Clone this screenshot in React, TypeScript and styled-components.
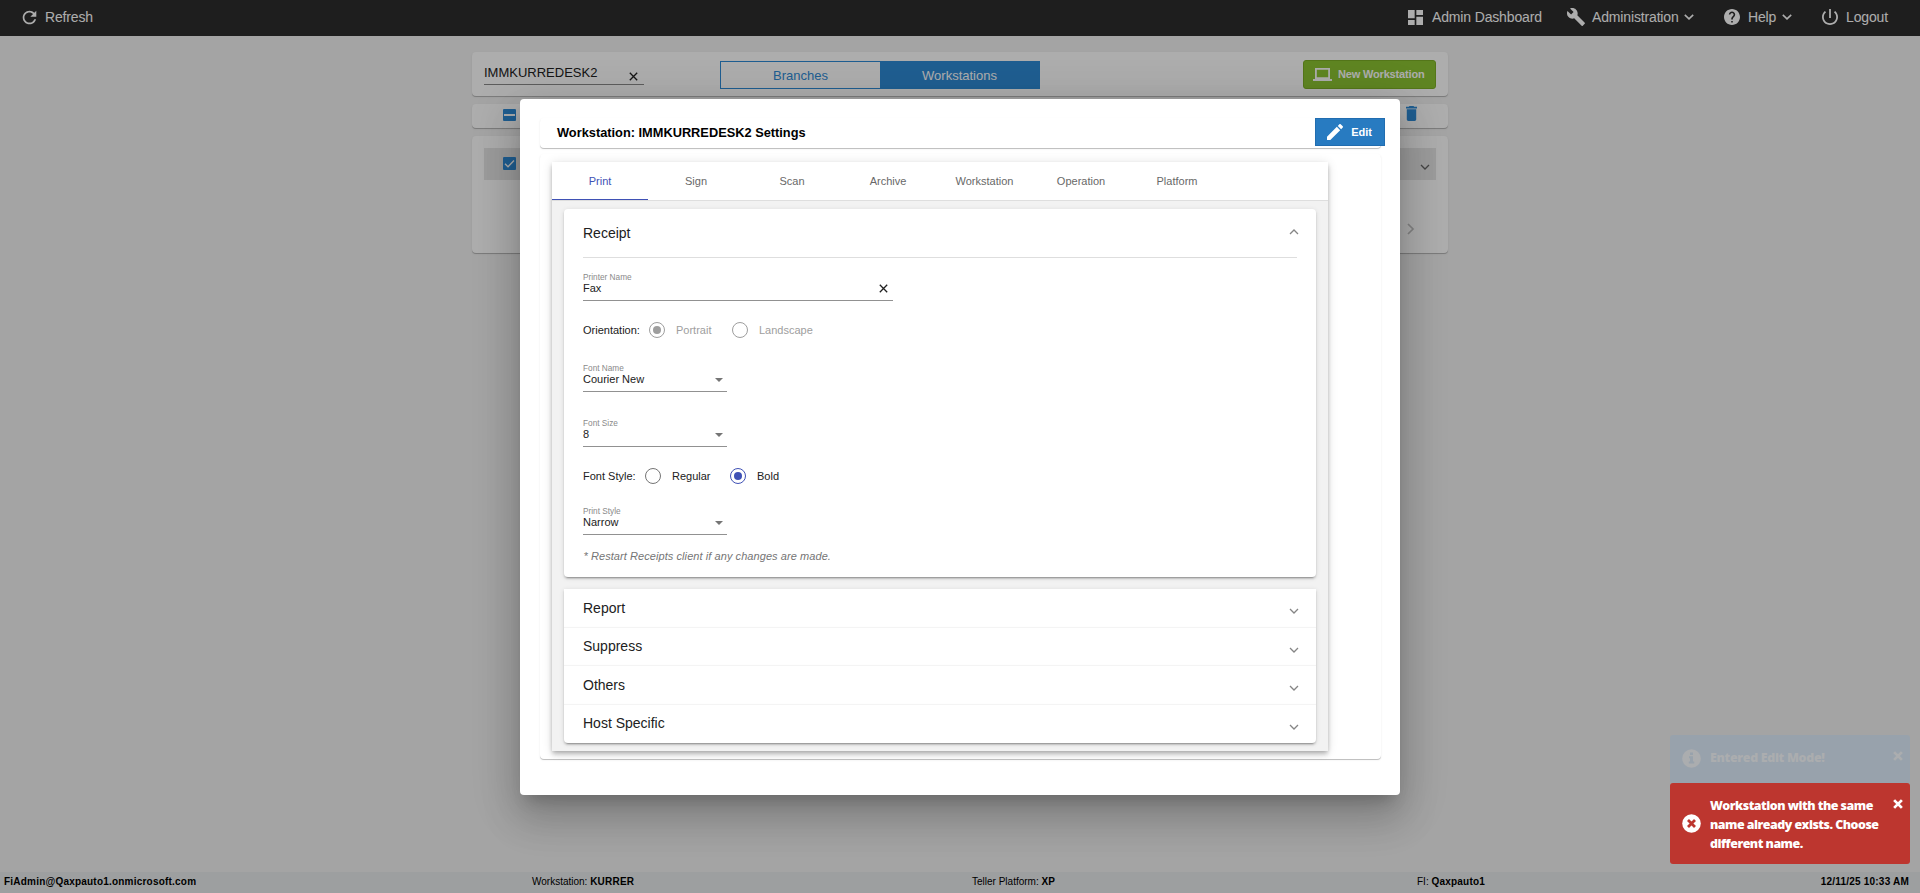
import React from "react";
import styled, { createGlobalStyle, css } from "styled-components";

const Global = createGlobalStyle`
  *, *::before, *::after { box-sizing: border-box; }
  html, body { margin: 0; padding: 0; }
  body { font-family: "Liberation Sans", Arial, sans-serif; font-size: 11px; color: #212121; overflow: hidden; background: #f2f2f2; }
`;

const cardShadow = "0 1px 0 0 rgba(0,0,0,.18), 0 1px 2px 0 rgba(0,0,0,.1)";
const panelShadow = "0 3px 1px -2px rgba(0,0,0,.2), 0 2px 2px 0 rgba(0,0,0,.14), 0 1px 5px 0 rgba(0,0,0,.12)";

const Page = styled.div`
  position: relative;
  width: 1920px;
  height: 893px;
  display: flex;
  flex-direction: column;
  background: #f2f2f2;
  overflow: hidden;
`;

const TopBar = styled.header`
  height: 36px;
  flex: none;
  display: flex;
  align-items: center;
  justify-content: space-between;
  padding: 0 31px 2px 21px;
  background: #2d2d2d;
  color: #fff;
  font-size: 14px;
  letter-spacing: -0.15px;
`;

const Menu = styled.nav`
  display: flex;
  align-items: center;
`;

const MenuItem = styled.div<{ $width?: number; $gap?: number }>`
  display: flex;
  align-items: center;
  gap: ${(p) => p.$gap ?? 7}px;
  width: ${(p) => (p.$width ? `${p.$width}px` : "auto")};
  white-space: nowrap;
  svg { flex: none; }
`;

const Caret = styled.svg`
  margin-left: -2px;
`;

const Main = styled.main`
  width: 976px;
  margin: 16px auto 0;
  display: flex;
  flex-direction: column;
  gap: 8px;
  flex: 1;
`;

const Card = styled.section<{ $height: number }>`
  height: ${(p) => p.$height}px;
  border-radius: 4px;
  background: #fff;
  box-shadow: ${cardShadow};
`;

const SearchCard = styled(Card)`
  display: flex;
  padding: 8px 12px;
`;

const SearchBox = styled.div`
  width: 160px;
  height: 25px;
  border-bottom: 1px solid #8a8a8a;
  display: flex;
  justify-content: space-between;
  padding: 5px 6px 0 0;
  font-size: 13px;
  line-height: 16px;
  svg { margin-top: 7px; }
`;

const Toggle = styled.div`
  display: flex;
  width: 320px;
  height: 28px;
  margin: 1px auto 0 76px;
  border: 1px solid #2f8bd6;
`;

const ToggleItem = styled.div<{ $active?: boolean }>`
  flex: 1;
  display: flex;
  align-items: center;
  justify-content: center;
  font-size: 13px;
  color: ${(p) => (p.$active ? "#fff" : "#2f8bd6")};
  background: ${(p) => (p.$active ? "#2f8bd6" : "transparent")};
`;

const NewButton = styled.div`
  width: 133px;
  height: 29px;
  display: flex;
  align-items: center;
  padding: 0 0 1px 9px;
  gap: 6px;
  border: 1px solid #7cae27;
  border-radius: 3px;
  background: #8dc533;
  color: #fff;
  font-size: 11px;
  font-weight: 700;
  letter-spacing: -0.17px;
  white-space: nowrap;
`;

const ActionCard = styled(Card)`
  display: flex;
  justify-content: space-between;
  padding: 1px 31px 0 31px;
  svg:first-child { margin-top: 4px; }
  svg:last-child { margin-top: 1px; }
`;

const ListCard = styled(Card)`
  padding: 12px;
`;

const ListRow = styled.div`
  height: 32px;
  display: flex;
  align-items: center;
  justify-content: space-between;
  padding: 0 6px 1px 19px;
  background: #e6e6e6;
  svg:last-child { margin-top: 6px; }
`;

const Pager = styled.div`
  display: flex;
  justify-content: flex-end;
  padding: 43px 21px 0 0;
`;

const Footer = styled.footer`
  flex: none;
  height: 21px;
  display: grid;
  grid-template-columns: 528px 440px 445px 1fr auto;
  align-items: center;
  padding: 0 11px 2px 4px;
  background: #e8ebec;
  color: #000;
  font-size: 10px;
`;

const Strong = styled.b`
  letter-spacing: 0.21px;
`;

const Backdrop = styled.div`
  position: absolute;
  inset: 0;
  padding-top: 99px;
  background: rgba(0, 0, 0, 0.32);
`;

const Dialog = styled.div`
  width: 880px;
  height: 696px;
  margin: 0 auto;
  padding: 19px 19px 0 20px;
  border-radius: 4px;
  background: #fff;
  box-shadow: 0 11px 15px -7px rgba(0,0,0,.2), 0 24px 38px 3px rgba(0,0,0,.14), 0 9px 46px 8px rgba(0,0,0,.12);
`;

const TitleCard = styled(Card)`
  display: flex;
  justify-content: space-between;
  padding-left: 17px;
  color: #000;
  font-size: 12.8px;
  font-weight: 700;
  line-height: 29px;
  white-space: nowrap;
`;

const EditButton = styled.div`
  width: 70px;
  height: 28px;
  margin-right: -4px;
  padding: 0 12px 0 11px;
  display: flex;
  align-items: center;
  justify-content: space-between;
  border: 1px solid #216db0;
  background: #287bc1;
  color: #fff;
  font-size: 11px;
  font-weight: 700;
`;

const ContentCard = styled(Card)`
  margin-top: 6px;
  padding: 8px 0 0 12px;
`;

const TabPanel = styled.div`
  width: 776px;
  height: 589px;
  background: #f2f2f2;
  box-shadow: 0 2px 4px -1px rgba(0,0,0,.2), 0 4px 5px 0 rgba(0,0,0,.14), 0 1px 10px 0 rgba(0,0,0,.12);
`;

const Tabs = styled.div`
  height: 39px;
  display: flex;
  background: #fff;
  border-bottom: 1px solid #dedede;
`;

const Tab = styled.div<{ $active?: boolean; $width: number }>`
  width: ${(p) => p.$width}px;
  padding-bottom: 1px;
  display: flex;
  align-items: center;
  justify-content: center;
  color: #686868;
  ${(p) => p.$active && css`
    color: #3f51b5;
    box-shadow: inset 0 -1px #3f51b5;
  `}
`;

const Accordion = styled.div`
  padding: 8px 12px;
  display: flex;
  flex-direction: column;
  gap: 12px;
`;

const OpenPanel = styled.section`
  height: 368px;
  padding: 0 19px;
  border-radius: 4px;
  background: #fff;
  box-shadow: ${panelShadow};
`;

const PanelHead = styled.div`
  height: 49px;
  display: flex;
  justify-content: space-between;
  align-items: center;
  border-bottom: 1px solid #dedede;
  font-size: 14px;
  svg { margin-right: -2px; margin-top: -3px; }
`;

const ClosedGroup = styled.section`
  height: 154px;
  border-radius: 0 0 4px 4px;
  background: #fff;
  box-shadow: ${panelShadow};
`;

const ClosedRow = styled.div`
  height: 38.5px;
  padding: 0 17px 1px 19px;
  display: flex;
  justify-content: space-between;
  align-items: center;
  font-size: 14px;
  svg { margin-top: 7px; }
  & + & { box-shadow: 0 -1px 1px rgba(0,0,0,.045); }
`;

const Field = styled.div<{ $width: number; $top: number }>`
  width: ${(p) => p.$width}px;
  height: 28px;
  margin-top: ${(p) => p.$top}px;
  border-bottom: 1px solid #919191;
`;

const Label = styled.div`
  height: 9px;
  font-size: 8.25px;
  line-height: 9px;
  color: #8a8a8a;
`;

const Value = styled.div<{ $pad?: number }>`
  display: flex;
  justify-content: space-between;
  align-items: center;
  height: 13px;
  padding-right: ${(p) => p.$pad ?? 4}px;
  line-height: 13px;
`;

const RadioRow = styled.div<{ $top: number }>`
  height: 16px;
  margin-top: ${(p) => p.$top}px;
  display: flex;
  align-items: center;
`;

const RadioTitle = styled.span<{ $width: number }>`
  width: ${(p) => p.$width}px;
`;

const RadioOption = styled.span<{ $width?: number; $muted?: boolean }>`
  display: flex;
  align-items: center;
  gap: 11px;
  width: ${(p) => (p.$width ? `${p.$width}px` : "auto")};
  color: ${(p) => (p.$muted ? "#9e9e9e" : "#212121")};
`;

const Dot = styled.span<{ $color: string; $on?: boolean }>`
  width: 16px;
  height: 16px;
  border: 1px solid ${(p) => p.$color};
  border-radius: 50%;
  display: flex;
  align-items: center;
  justify-content: center;
  &::after {
    content: "";
    width: 8px;
    height: 8px;
    border-radius: 50%;
    background: ${(p) => (p.$on ? p.$color : "transparent")};
  }
`;

const Note = styled.p`
  margin: 15px 0 0 0.5px;
  color: #757575;
  font-style: italic;
  line-height: 13px;
  letter-spacing: 0.07px;
`;

const ToastStack = styled.div`
  position: absolute;
  right: 10px;
  top: 735px;
  width: 240px;
`;

const Toast = styled.div<{ $info?: boolean }>`
  height: ${(p) => (p.$info ? 48 : 81)}px;
  padding: ${(p) => (p.$info ? "13px 7px 0 12px" : "13px 7px 0 12px")};
  display: flex;
  border-radius: 3px;
  background: ${(p) => (p.$info ? "#98a2ac" : "#bd362f")};
  color: ${(p) => (p.$info ? "#abadaf" : "#fff")};
  font: 800 12.4px/19px "Open Sans", sans-serif;
  letter-spacing: ${(p) => (p.$info ? -0.3 : -0.5)}px;
  white-space: nowrap;
`;

const ToastIcon = styled.svg<{ $top: number }>`
  flex: none;
  margin: ${(p) => p.$top}px 9px 0 0;
`;

const ToastCross = styled.svg<{ $top: number }>`
  flex: none;
  margin-top: ${(p) => p.$top}px;
`;

const ToastText = styled.div`
  flex: 1;
`;

const Clear = () => (
  <svg width="9" height="9" viewBox="0 0 9 9" fill="none" stroke="#212121" strokeWidth="1.3">
    <path d="M.8.8l7.4 7.4M8.2.8L.8 8.2" />
  </svg>
);

const Chevron = ({ up, color = "#858585" }: { up?: boolean; color?: string }) => (
  <svg width="10" height="6" viewBox="0 0 10 6" fill="none" stroke={color} strokeWidth="1.3">
    <path d={up ? "M1 5l4-4 4 4" : "M1 1l4 4 4-4"} />
  </svg>
);

const MenuCaret = () => (
  <Caret width="10" height="6" viewBox="0 0 10 6" fill="none" stroke="#fff" strokeWidth="1.6">
    <path d="M.8.8L5 4.800 9.200.8" />
  </Caret>
);

const Arrow = () => (
  <svg width="8" height="4" viewBox="0 0 8 4"><path d="M0 0h8L4 4z" fill="#757575" /></svg>
);

const ToastClose = ({ top }: { top: number }) => (
  <ToastCross $top={top} width="10" height="10" viewBox="0 0 9 9" stroke="currentColor" strokeWidth="2.5">
    <path d="M1 1l7 7M8 1L1 8" />
  </ToastCross>
);

const Select = ({ label, value, top }: { label: string; value: string; top: number }) => (
  <Field $width={144} $top={top}>
    <Label>{label}</Label>
    <Value>{value}<Arrow /></Value>
  </Field>
);

const tabs = ["Print", "Sign", "Scan", "Archive", "Workstation", "Operation", "Platform"];
const closed = ["Report", "Suppress", "Others", "Host Specific"];

export default function App() {
  return (
    <Page>
      <Global />
      <TopBar>
        <MenuItem>
          <svg width="17" height="17" viewBox="2 2 20 20" fill="#fff">
            <path d="M17.65 6.35C16.2 4.9 14.21 4 12 4c-4.42 0-7.99 3.58-7.99 8s3.57 8 7.99 8c3.73 0 6.84-2.55 7.73-6h-2.08c-.82 2.33-3.04 4-5.65 4-3.31 0-6-2.69-6-6s2.69-6 6-6c1.66 0 3.14.69 4.22 1.78L13 11h7V4l-2.35 2.35z" />
          </svg>
          Refresh
        </MenuItem>
        <Menu>
          <MenuItem $width={159} $gap={9}>
            <svg width="15" height="15" viewBox="3 3 18 18" fill="#fff"><path d="M3 13h8V3H3v10zm0 8h8v-6H3v6zm10 0h8V11h-8v10zm0-18v6h8V3h-8z" /></svg>
            Admin Dashboard
          </MenuItem>
          <MenuItem $width={157}>
            <svg width="18" height="18" viewBox="1 1 22 22" fill="#fff"><path d="M22.7 19l-9.1-9.1c.9-2.3.4-5-1.5-6.9-2-2-5-2.4-7.4-1.3L9 6 6 9 1.6 4.7C.4 7.1.9 10.1 2.9 12.1c1.9 1.9 4.6 2.4 6.9 1.5l9.1 9.1c.4.4 1 .4 1.4 0l2.3-2.3c.5-.4.5-1.1.1-1.4z" /></svg>
            Administration
            <MenuCaret />
          </MenuItem>
          <MenuItem $width={98} $gap={8}>
            <svg width="16" height="16" viewBox="2 2 20 20" fill="#fff"><path d="M12 2C6.48 2 2 6.48 2 12s4.480 10 10 10 10-4.480 10-10S17.520 2 12 2zm1 17h-2v-2h2v2zm2.070-7.750l-.9.920C13.450 12.900 13 13.500 13 15h-2v-.5c0-1.100.45-2.100 1.170-2.830l1.240-1.260c.37-.36.59-.86.59-1.410 0-1.100-.9-2-2-2s-2 .9-2 2H8c0-2.210 1.790-4 4-4s4 1.790 4 4c0 .88-.36 1.680-.93 2.250z" /></svg>
            Help
            <MenuCaret />
          </MenuItem>
          <MenuItem $gap={8} $width={67}>
            <svg width="16" height="16" viewBox="3 3 18 18" fill="#fff"><path d="M13 3h-2v10h2V3zm4.830 2.170l-1.420 1.420C17.990 7.860 19 9.810 19 12c0 3.870-3.130 7-7 7s-7-3.130-7-7c0-2.190 1.010-4.140 2.580-5.420L6.170 5.170C4.230 6.820 3 9.260 3 12c0 4.970 4.030 9 9 9s9-4.030 9-9c0-2.740-1.230-5.180-3.170-6.830z" /></svg>
            Logout
          </MenuItem>
        </Menu>
      </TopBar>

      <Main>
        <SearchCard $height={44}>
          <SearchBox>IMMKURREDESK2<Clear /></SearchBox>
          <Toggle>
            <ToggleItem>Branches</ToggleItem>
            <ToggleItem $active>Workstations</ToggleItem>
          </Toggle>
          <NewButton>
            <svg width="19" height="13" viewBox="0 0 19 13" fill="none" stroke="#fff" strokeWidth="1.8"><path d="M2.900.9h13.200v9.200H2.900zM0 12h19" /></svg>
            New Workstation
          </NewButton>
        </SearchCard>
        <ActionCard $height={24}>
          <svg width="13" height="12"><rect width="13" height="12" rx="1" fill="#2f8bd6" /><path d="M1 6h11" stroke="#fff" strokeWidth="2" /></svg>
          <svg width="11" height="15" viewBox="5 3 14 18" preserveAspectRatio="none" fill="#2f8bd6"><path d="M6 19c0 1.100.9 2 2 2h8c1.100 0 2-.9 2-2V7H6v12zM19 4h-3.500l-1-1h-5l-1 1H5v2h14V4z" /></svg>
        </ActionCard>
        <ListCard $height={117}>
          <ListRow>
            <svg width="13" height="13"><rect width="13" height="13" rx="1" fill="#2f8bd6" /><path d="M2 6.700l3 3L11 3.500" stroke="#fff" strokeWidth="1.400" fill="none" /></svg>
            <Chevron color="#666" />
          </ListRow>
          <Pager>
            <svg width="8" height="12" viewBox="0 0 8 12" fill="none" stroke="#c2c2c2" strokeWidth="1.700"><path d="M1 1l5 5-5 5" /></svg>
          </Pager>
        </ListCard>
      </Main>

      <Footer>
        <Strong>FiAdmin@Qaxpauto1.onmicrosoft.com</Strong>
        <span>Workstation: <Strong>KURRER</Strong></span>
        <span>Teller Platform: <Strong>XP</Strong></span>
        <span>FI: <Strong>Qaxpauto1</Strong></span>
        <Strong>12/11/25 10:33 AM</Strong>
      </Footer>

      <Backdrop>
        <Dialog>
          <TitleCard $height={30}>
            Workstation: IMMKURREDESK2 Settings
            <EditButton>
              <svg width="16" height="16" viewBox="3 3 18 18" fill="#fff"><path d="M3 17.250V21h3.750L17.810 9.940l-3.750-3.750L3 17.250zM20.710 7.040c.39-.39.39-1.020 0-1.410l-2.340-2.340c-.39-.39-1.020-.39-1.410 0l-1.830 1.830 3.750 3.750 1.830-1.830z" /></svg>
              Edit
            </EditButton>
          </TitleCard>
          <ContentCard $height={605}>
            <TabPanel>
              <Tabs>
                {tabs.map((t, i) => <Tab key={t} $active={i === 0} $width={t === "Workstation" ? 97 : 96}>{t}</Tab>)}
              </Tabs>
              <Accordion>
                <OpenPanel>
                  <PanelHead>Receipt<Chevron up /></PanelHead>
                  <Field $width={310} $top={15}>
                    <Label>Printer Name</Label>
                    <Value $pad={5}>Fax<Clear /></Value>
                  </Field>
                  <RadioRow $top={21}>
                    <RadioTitle $width={66}>Orientation:</RadioTitle>
                    <RadioOption $width={83} $muted><Dot $color="#9e9e9e" $on />Portrait</RadioOption>
                    <RadioOption $muted><Dot $color="#9e9e9e" />Landscape</RadioOption>
                  </RadioRow>
                  <Select label="Font Name" value="Courier New" top={26} />
                  <Select label="Font Size" value="8" top={27} />
                  <RadioRow $top={21}>
                    <RadioTitle $width={62}>Font Style:</RadioTitle>
                    <RadioOption $width={85}><Dot $color="#757575" />Regular</RadioOption>
                    <RadioOption><Dot $color="#3f51b5" $on />Bold</RadioOption>
                  </RadioRow>
                  <Select label="Print Style" value="Narrow" top={23} />
                  <Note>* Restart Receipts client if any changes are made.</Note>
                </OpenPanel>
                <ClosedGroup>
                  {closed.map((t) => <ClosedRow key={t}>{t}<Chevron /></ClosedRow>)}
                </ClosedGroup>
              </Accordion>
            </TabPanel>
          </ContentCard>
        </Dialog>
      </Backdrop>

      <ToastStack>
        <Toast $info>
          <ToastIcon $top={1} width="19" height="19" viewBox="0 0 19 19">
            <circle cx="9.500" cy="9.500" r="9.300" fill="#abadaf" />
            <path d="M8 3.500h3v2.400H8zM7 7.300h4v5.300h1.200v2H6.800v-2H8V9.200H7z" fill="#98a2ac" />
          </ToastIcon>
          <ToastText>Entered Edit Mode!</ToastText>
          <ToastClose top={3} />
        </Toast>
        <Toast>
          <ToastIcon $top={18} width="19" height="19" viewBox="0 0 19 19">
            <circle cx="9.500" cy="9.500" r="9.300" fill="#fff" />
            <path d="M6 6l7 7M13 6l-7 7" stroke="#bd362f" strokeWidth="2.800" />
          </ToastIcon>
          <ToastText>Workstation with the same<br />name already exists. Choose<br />different name.</ToastText>
          <ToastClose top={3} />
        </Toast>
      </ToastStack>
    </Page>
  );
}
